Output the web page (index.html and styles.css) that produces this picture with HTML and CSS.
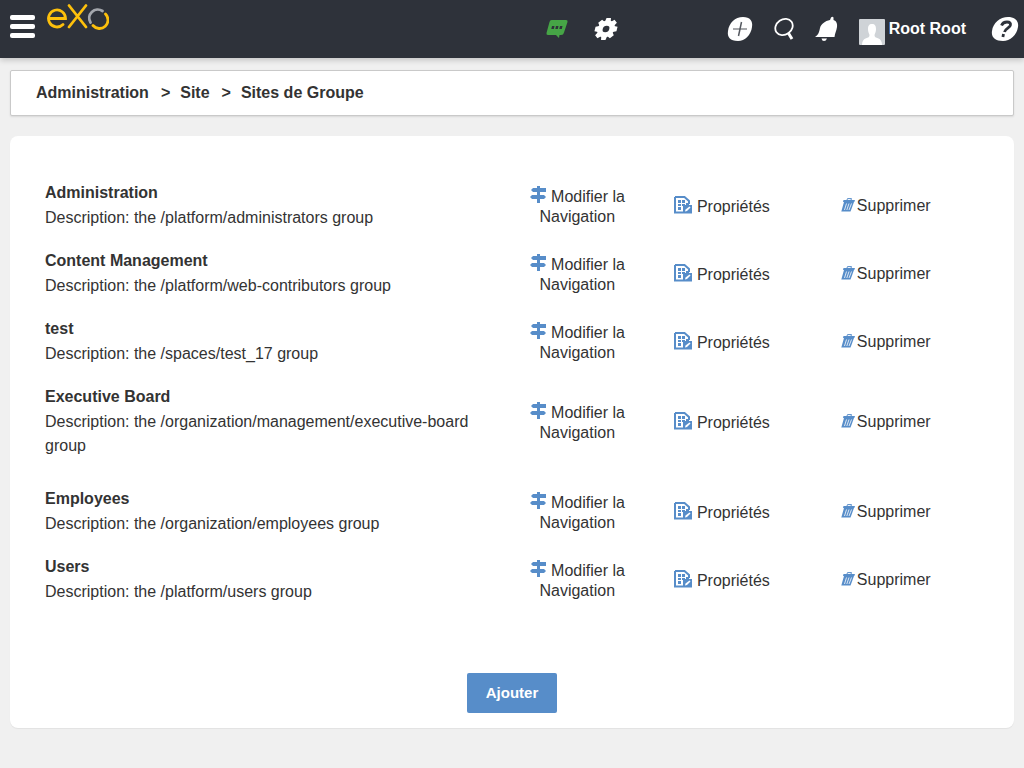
FILE: index.html
```html
<!DOCTYPE html>
<html lang="fr">
<head>
<meta charset="utf-8">
<meta name="viewport" content="width=device-width, initial-scale=1">
<title>Sites de Groupe</title>
<link rel="stylesheet" href="styles.css">
</head>
<body>
<svg class="sprite" aria-hidden="true">
  <symbol id="sign" viewBox="0 0 17 18">
    <path d="M7 0h3v2h6v4h-6v3h4l2 2-2 2h-4V17H7v-4H2L0 11 2 9h5V6H3L1 4l2-2h4z"/>
  </symbol>
  <symbol id="props" viewBox="0 0 18 18">
    <path d="M1 1h9.500L15 5v3M1 1v15.500h8" fill="none" stroke="currentColor" stroke-width="2"/>
    <path d="M4 4h3v3H4zM8 4h3v3H8zM4 8h3v2H4zM8 8h3v2H8zM12 7h3v2h-3zM4 11h3v3H4z"/>
    <path d="M9 9h9v8.500H9z"/>
    <path d="M11 15.500l.5-2 4-3 1 1-3.500 3.500z" fill="#fff"/>
  </symbol>
  <symbol id="trash" viewBox="0 0 14 14">
    <path d="M6 2l.5-1.400h4L10 2" fill="none" stroke="currentColor"/>
    <path d="M2.500 2H14l-.7 2H2z"/>
    <path d="M3 4h10L9.500 13.500H.3z"/>
    <path d="M5.500 5.500L3.500 12M8 5.500L5.800 12M10.500 5.500L8 12" stroke="#fff" stroke-width=".8"/>
  </symbol>
</svg>

<header class="topbar">
  <div class="topbar-left">
    <button class="icon-button menu" type="button" aria-label="Menu"><span></span><span></span><span></span></button>
    <a class="logo" href="#" aria-label="eXo">
      <svg width="62" height="27" viewBox="0 0 62 27" fill="none" stroke-linecap="round" stroke-width="2.800">
        <path d="M3 15.500h15.500A8.500 8.500 0 1 0 16 21.500" stroke="#fdc00c"/>
        <path d="M22 2.500l17 21.500M39 2.500L22 24" stroke="#fdc00c"/>
        <path d="M43.500 19.500A8.500 8.500 0 0 1 55.500 8" stroke="#a3a6ac"/>
        <path d="M46 22.500A8.500 8.500 0 1 0 58.500 11" stroke="#fdc00c"/>
      </svg>
    </a>
  </div>
  <nav class="topbar-center" aria-label="Outils">
    <button class="icon-button" type="button" aria-label="Discussion">
      <svg width="22" height="18" viewBox="0 0 22 18"><path d="M5.500 0H20q2 0 1.500 2L18 12.500Q17.500 15 15 15h-1.500L13 18l-3-3H2Q0 15 .5 13L3.500 2Q4 0 5.500 0z" fill="#46a546"/><path d="M6 6h2.500l-.7 3H5.300zM10 6h2.500l-.7 3H9.300zM14 6h2.500l-.7 3h-2.500z" fill="#2e323a"/></svg>
    </button>
    <button class="icon-button" type="button" aria-label="Paramètres">
      <svg width="24" height="24" viewBox="0 0 24 24"><g transform="matrix(1 0 -.25 1 3 0)" fill="#fff"><circle cx="12" cy="12" r="8.500"/><path id="tooth" d="M9.800 1h4.400l1 5H8.800zM9.800 23h4.400l1-5H8.800z"/><use href="#tooth" transform="rotate(45 12 12)"/><use href="#tooth" transform="rotate(90 12 12)"/><use href="#tooth" transform="rotate(135 12 12)"/><circle cx="12" cy="12" r="3.300" fill="#2e323a"/></g></svg>
    </button>
  </nav>
  <div class="topbar-right">
    <button class="icon-button" type="button" aria-label="Créer">
      <svg width="26" height="26" viewBox="0 0 26 26"><path d="M16 1c7 0 10 4 9 10-1 8-7 14-14 14C3 25 0 21 1 15 2 7 8 1 16 1z" fill="#fff"/><path d="M6 13h14" stroke="#a6a8ab" stroke-width="2"/><path d="M14.500 6l-3 14" stroke="#555960" stroke-width="1.500"/></svg>
    </button>
    <button class="icon-button" type="button" aria-label="Rechercher">
      <svg width="20" height="24" viewBox="0 0 20 24" fill="none" stroke="#fff"><ellipse cx="10" cy="10" rx="9.200" ry="7.600" transform="rotate(-35 10 10)" stroke-width="1.800"/><path d="M14 15.500l4 6.500" stroke-width="3"/></svg>
    </button>
    <button class="icon-button" type="button" aria-label="Notifications">
      <svg width="23" height="26" viewBox="0 0 23 26" fill="#fff"><path d="M16 1.500q1.500-1.500 2.500 0V4c3 1 4 4 3.500 7-.6 4-2 6-2.500 10H0c4-3 4-5 5-9 1-4 5-7 10-8zM6.500 22.500H12q-1 2.500-3 2.500t-2.500-2.500z"/></svg>
    </button>
    <button class="icon-button user" type="button">
      <svg width="26" height="26" viewBox="0 0 26 26"><rect width="26" height="26" rx="1" fill="#cfd3d7"/><path d="M13 5c3 0 4 2 4 5 0 3-1 4-1.500 6 0 2 1 2.500 4 3.500 2 .6 3.500 3 3.500 6.500H3c0-3.500 1.500-5.900 3.500-6.500 3-1 4-1.500 4-3.500C10 14 9 13 9 10c0-3 1-5 4-5z" fill="#fff"/></svg>
      <span>Root Root</span>
    </button>
    <button class="icon-button help" type="button" aria-label="Aide">
      <svg width="28" height="26" viewBox="0 0 28 26"><path d="M17 1c7 0 11 4 10 10-1 8-8 14-15 14C4 25 0 21 1 15 2 7 9 1 17 1z" fill="#fff"/><path d="M10.500 9.500c1-2.500 3-3.500 5.500-3.500 3 0 4 1.500 3.300 3.500-1 2.500-5 3-5.800 6.500M12.500 18l-.6 3" fill="none" stroke="#2e323a" stroke-width="2.800"/></svg>
    </button>
  </div>
</header>

<nav class="breadcrumb" aria-label="Fil d'Ariane">
  <a href="#">Administration</a><span>&gt;</span><a href="#">Site</a><span>&gt;</span><a href="#">Sites de Groupe</a>
</nav>

<main class="panel">
  <table class="sites">
    <colgroup><col class="col-name"><col class="col-nav"><col class="col-props"><col class="col-delete"></colgroup>
    <tbody>
      <tr>
        <td><h2>Administration</h2><p>Description: the /platform/administrators group</p></td>
        <td class="action"><a href="#"><svg class="icon-sign"><use href="#sign"/></svg> Modifier la Navigation</a></td>
        <td class="action"><a href="#"><svg class="icon-props"><use href="#props"/></svg> Propriétés</a></td>
        <td class="action"><a href="#"><svg class="icon-trash"><use href="#trash"/></svg>Supprimer</a></td>
      </tr>
      <tr>
        <td><h2>Content Management</h2><p>Description: the /platform/web-contributors group</p></td>
        <td class="action"><a href="#"><svg class="icon-sign"><use href="#sign"/></svg> Modifier la Navigation</a></td>
        <td class="action"><a href="#"><svg class="icon-props"><use href="#props"/></svg> Propriétés</a></td>
        <td class="action"><a href="#"><svg class="icon-trash"><use href="#trash"/></svg>Supprimer</a></td>
      </tr>
      <tr>
        <td><h2>test</h2><p>Description: the /spaces/test_17 group</p></td>
        <td class="action"><a href="#"><svg class="icon-sign"><use href="#sign"/></svg> Modifier la Navigation</a></td>
        <td class="action"><a href="#"><svg class="icon-props"><use href="#props"/></svg> Propriétés</a></td>
        <td class="action"><a href="#"><svg class="icon-trash"><use href="#trash"/></svg>Supprimer</a></td>
      </tr>
      <tr class="long">
        <td><h2>Executive Board</h2><p>Description: the /organization/management/executive-board group</p></td>
        <td class="action"><a href="#"><svg class="icon-sign"><use href="#sign"/></svg> Modifier la Navigation</a></td>
        <td class="action"><a href="#"><svg class="icon-props"><use href="#props"/></svg> Propriétés</a></td>
        <td class="action"><a href="#"><svg class="icon-trash"><use href="#trash"/></svg>Supprimer</a></td>
      </tr>
      <tr>
        <td><h2>Employees</h2><p>Description: the /organization/employees group</p></td>
        <td class="action"><a href="#"><svg class="icon-sign"><use href="#sign"/></svg> Modifier la Navigation</a></td>
        <td class="action"><a href="#"><svg class="icon-props"><use href="#props"/></svg> Propriétés</a></td>
        <td class="action"><a href="#"><svg class="icon-trash"><use href="#trash"/></svg>Supprimer</a></td>
      </tr>
      <tr>
        <td><h2>Users</h2><p>Description: the /platform/users group</p></td>
        <td class="action"><a href="#"><svg class="icon-sign"><use href="#sign"/></svg> Modifier la Navigation</a></td>
        <td class="action"><a href="#"><svg class="icon-props"><use href="#props"/></svg> Propriétés</a></td>
        <td class="action"><a href="#"><svg class="icon-trash"><use href="#trash"/></svg>Supprimer</a></td>
      </tr>
    </tbody>
  </table>
  <div class="panel-footer"><button class="add" type="button">Ajouter</button></div>
</main>
</body>
</html>
```
FILE: styles.css
```css
* {
  box-sizing: border-box;
}

body {
  margin: 0;
  background: #f0f0f0;
  color: #333;
  font: 16px/20px "Liberation Sans", Arial, sans-serif;
}

a {
  color: inherit;
  text-decoration: none;
}

.sprite {
  display: none;
}

/* Top bar */
.topbar {
  display: grid;
  grid-template-columns: 1fr auto 1fr;
  height: 58px;
  padding: 0 5px 0 10px;
  background: #2e323a;
  box-shadow: 0 2px 6px rgba(0, 0, 0, 0.2);
}

.topbar-left,
.topbar-center,
.topbar-right {
  display: flex;
  align-items: center;
}

.topbar-left {
  align-items: flex-start;
  gap: 12px;
}

.topbar-center {
  gap: 26px;
  padding-left: 134px;
}

.topbar-right {
  justify-content: flex-end;
  gap: 21px;
}

.icon-button {
  display: flex;
  align-items: center;
  padding: 0;
  border: 0;
  background: none;
  color: #fff;
  font: inherit;
  cursor: pointer;
}

.menu {
  flex-direction: column;
  gap: 4px;
  padding-top: 15px;
}

.menu span {
  width: 25px;
  height: 5px;
  border-radius: 2px;
  background: #fff;
}

.logo {
  padding-top: 3px;
}

.user {
  gap: 4px;
  font-weight: bold;
}

.user svg {
  margin-top: 6px;
}

.help {
  margin-left: 4px;
}

/* Breadcrumb */
.breadcrumb {
  display: flex;
  margin: 12px 10px 20px;
  padding: 12px 25px;
  border: 1px solid #c9c9c9;
  border-radius: 2px;
  background: #fff;
  box-shadow: 0 1px 2px rgba(0, 0, 0, 0.1);
  font-weight: bold;
}

.breadcrumb span {
  padding: 0 10px 0 12px;
}

/* Site list */
.panel {
  margin: 0 10px 40px;
  padding: 36px 25px 15px;
  border-radius: 8px;
  background: #fff;
  box-shadow: 0 1px 1px rgba(0, 0, 0, 0.06);
}

.sites {
  width: 98%;
  border-collapse: collapse;
  table-layout: fixed;
}

.col-name {
  width: 51%;
}

.col-nav {
  width: 14%;
}

.col-props {
  width: 17%;
}

.col-delete {
  width: 18%;
}

.sites td {
  padding: 10px;
}

.sites .long td {
  padding-bottom: 20px;
}

.sites h2,
.sites p {
  margin: 0;
  font-size: 16px;
  line-height: 24px;
}

.sites h2 {
  padding-bottom: 2px;
  line-height: 22px;
}

.sites .action {
  text-align: center;
}

.action svg {
  fill: #578dc9;
  color: #578dc9;
}

.icon-sign {
  width: 17px;
  height: 18px;
  vertical-align: -2px;
}

.icon-props {
  width: 18px;
  height: 18px;
  vertical-align: -2px;
}

.icon-trash {
  width: 14px;
  height: 14px;
  margin-right: 2px;
  vertical-align: -1px;
}

.panel-footer {
  padding-top: 59px;
  text-align: center;
}

.add {
  height: 40px;
  padding: 0 19px;
  border: 0;
  border-radius: 2px;
  background: #578dc9;
  color: #fff;
  font: bold 15px/20px "Liberation Sans", Arial, sans-serif;
  cursor: pointer;
}
```
